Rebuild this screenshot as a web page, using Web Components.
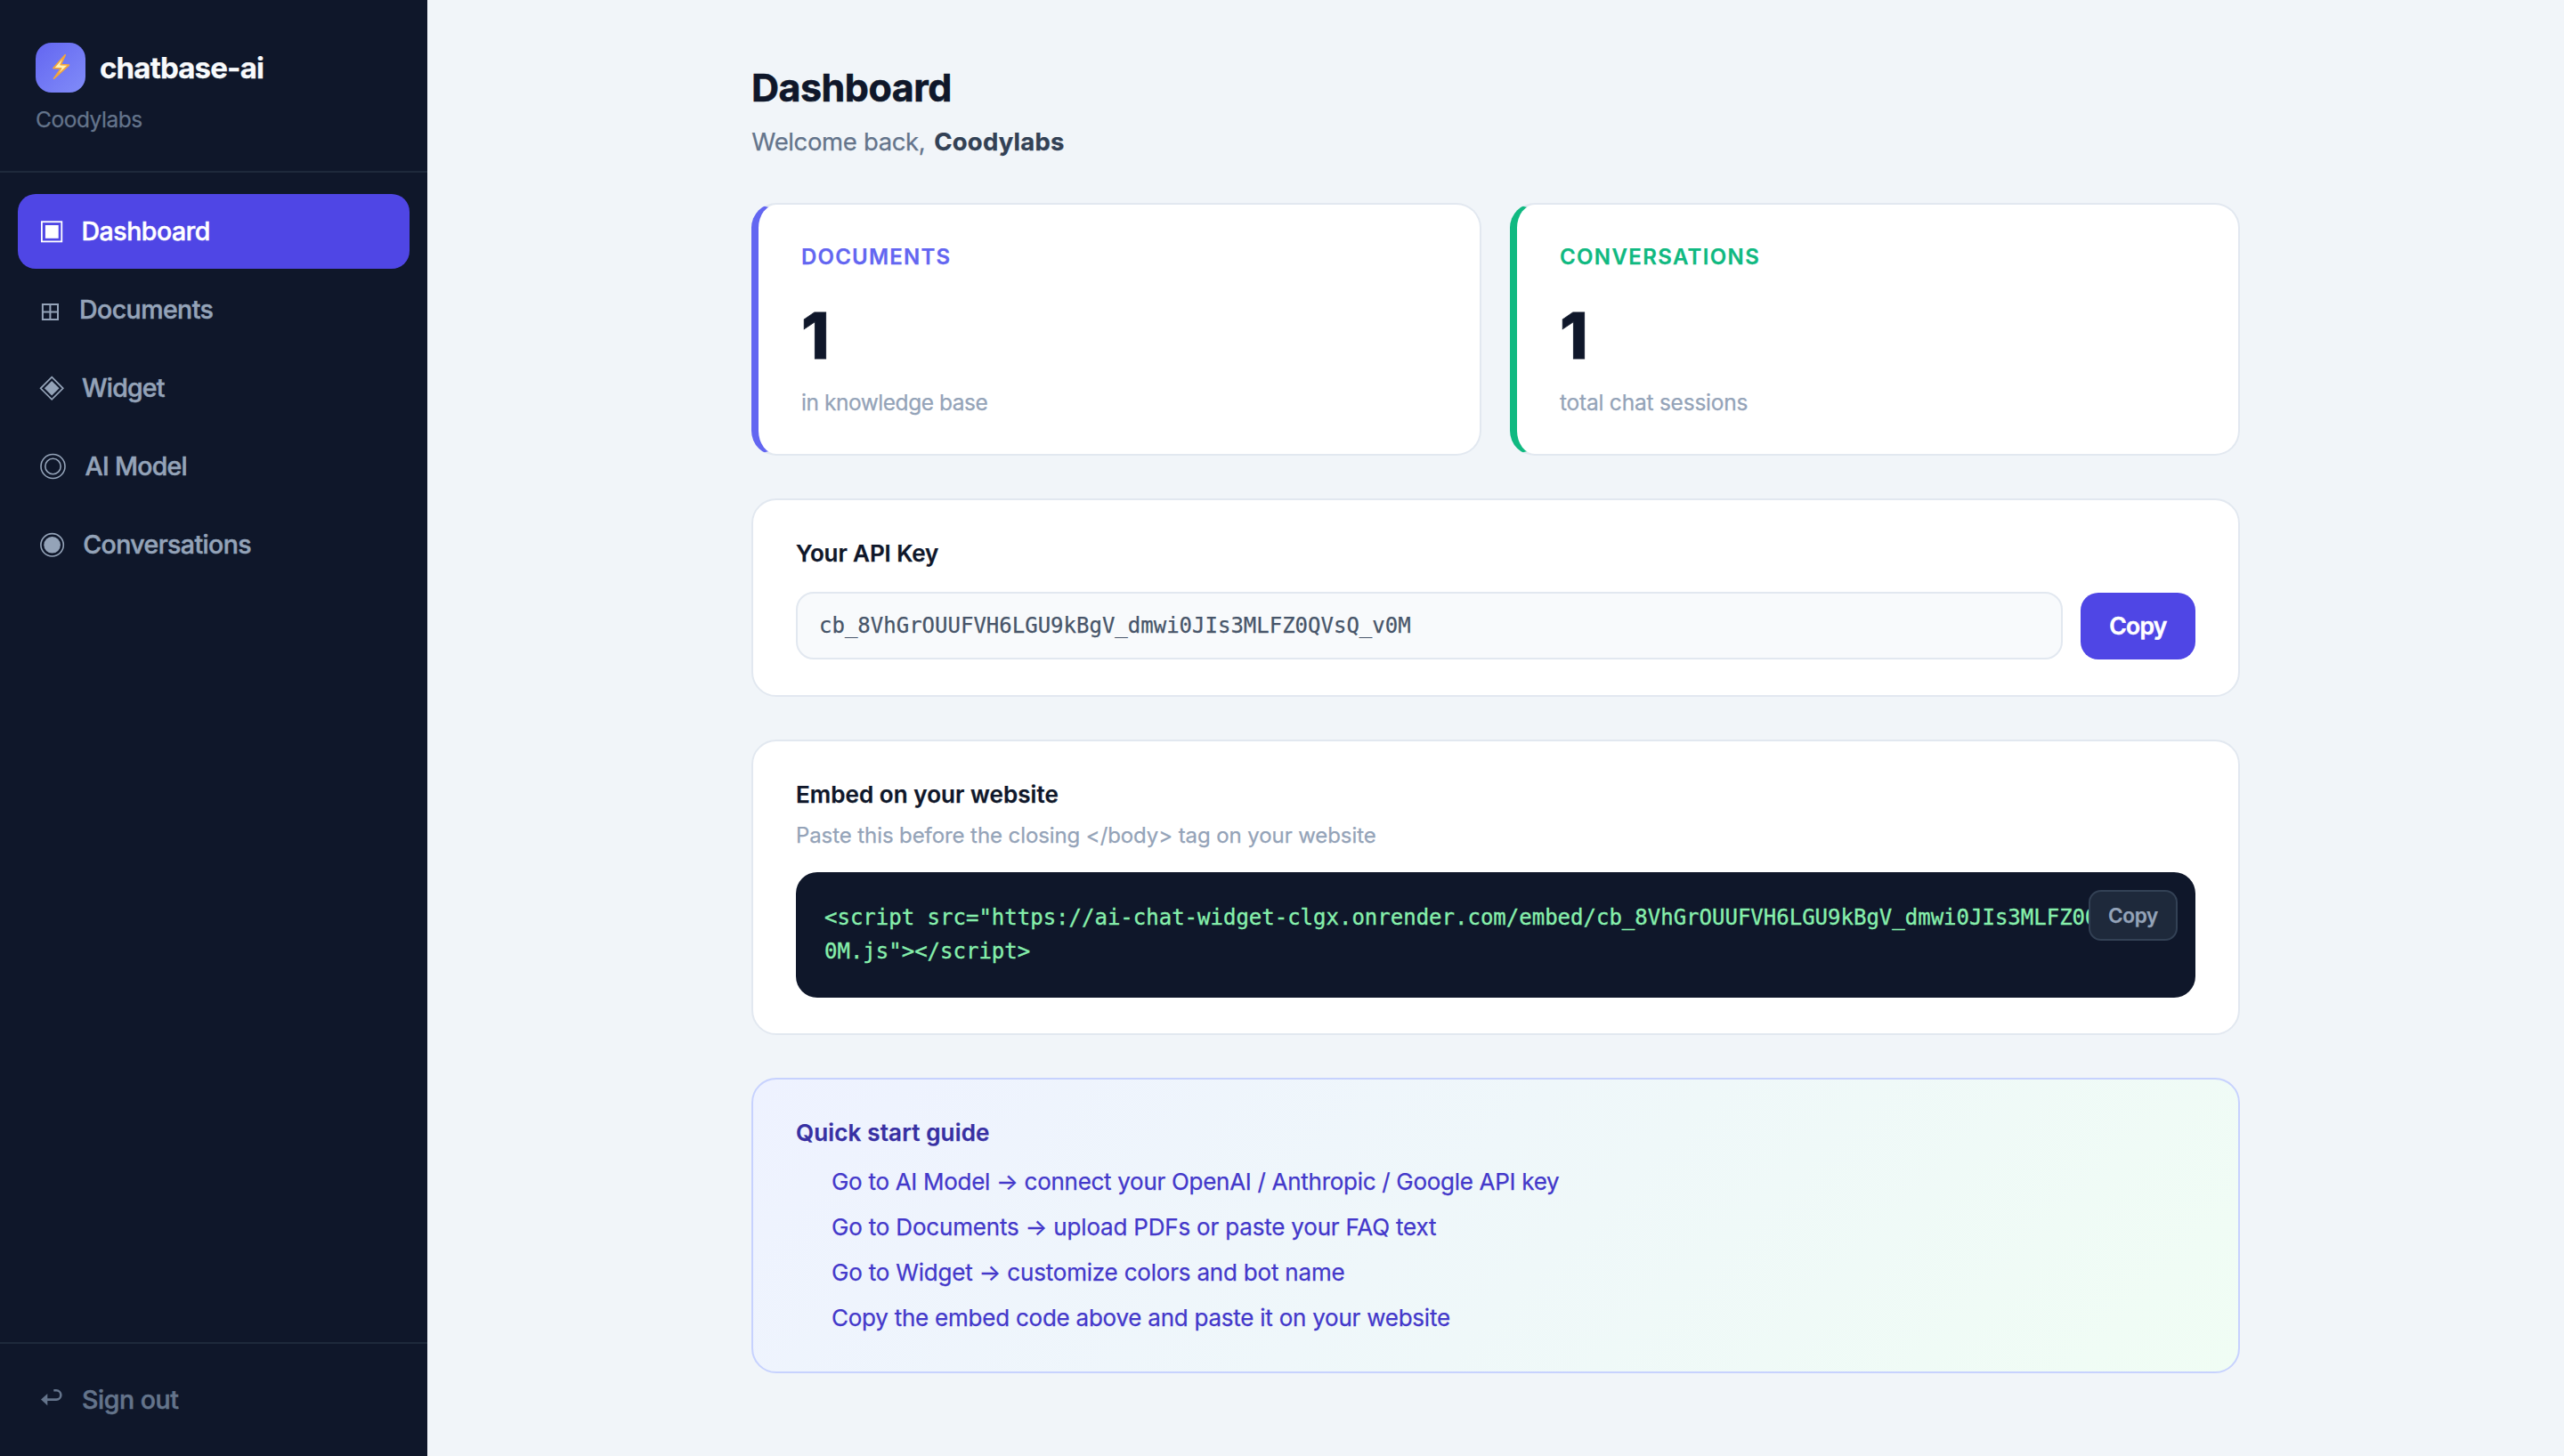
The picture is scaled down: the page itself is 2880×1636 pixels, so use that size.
<!DOCTYPE html>
<html lang="en">
<head>
<meta charset="utf-8">
<title>chatbase-ai – Dashboard</title>
<style>
html,body{margin:0;height:100%}
body{font-family:Inter,"Liberation Sans",sans-serif;background:#f1f5f9;color:#0f172a;overflow:hidden;-webkit-text-stroke:.25px}
</style>
</head>
<body>
<app-shell>
  <app-sidebar slot="sidebar">
    <brand-mark slot="brand" name="chatbase-ai" org="Coodylabs"></brand-mark>
    <nav-item icon="dashboard" active style="--iw:27.5px;--ls:-.48px">Dashboard</nav-item>
    <nav-item icon="documents" style="--iw:25px;--ls:-.56px">Documents</nav-item>
    <nav-item icon="widget" style="--iw:28px;--ls:-.8px">Widget</nav-item>
    <nav-item icon="model" style="--iw:31.5px;--ls:-.72px">AI Model</nav-item>
    <nav-item icon="conversations" style="--iw:29.3px;--ls:-.6px">Conversations</nav-item>
    <nav-item slot="footer" icon="signout" muted style="--iw:28px;--ls:-.45px">Sign out</nav-item>
  </app-sidebar>
  <page-header heading="Dashboard">Welcome back, <strong slot="who">Coodylabs</strong></page-header>
  <stat-row>
    <stat-card label="DOCUMENTS" value="1" style="--accent:#6366f1;--lls:1.206px;--nls:-.46px">in knowledge base</stat-card>
    <stat-card label="CONVERSATIONS" value="1" style="--accent:#10b981;--lls:1.36px;--nls:-.22px">total chat sessions</stat-card>
  </stat-row>
  <panel-card heading="Your API Key" style="height:223px;--hls:-.1px">
    <api-key value="cb_8VhGrOUUFVH6LGU9kBgV_dmwi0JIs3MLFZ0QVsQ_v0M"></api-key>
  </panel-card>
  <panel-card heading="Embed on your website" style="height:332px;--hls:.055px">
    <embed-code></embed-code>
  </panel-card>
  <panel-card heading="Quick start guide" guide style="height:332px;--hls:.152px">
    <guide-list>
      <span style="letter-spacing:-.291px">Go to AI Model → connect your OpenAI / Anthropic / Google API key</span>
      <span style="letter-spacing:-.188px">Go to Documents → upload PDFs or paste your FAQ text</span>
      <span style="letter-spacing:-.2px">Go to Widget → customize colors and bot name</span>
      <span style="letter-spacing:-.24px">Copy the embed code above and paste it on your website</span>
    </guide-list>
  </panel-card>
</app-shell>
<script>
const define = (name, render) => customElements.define(name, class extends HTMLElement {
  connectedCallback() {
    if (this.shadowRoot) return;
    this.attachShadow({ mode: 'open' }).innerHTML =
      '<style>*{box-sizing:border-box}:host{box-sizing:border-box}</style>' + render(this);
  }
});

define('app-shell', () => `
<style>
:host{display:flex;height:100vh}
main{flex:1;display:flex;flex-direction:column;align-items:center;padding-top:72px}
.col{width:1672px;display:flex;flex-direction:column}
</style>
<slot name="sidebar"></slot>
<main><div class="col"><slot></slot></div></main>`);

define('app-sidebar', () => `
<style>
:host{display:flex;flex-direction:column;width:480px;flex:none;background:#0f172a}
header{height:194px;padding:48px 40px 0;border-bottom:2px solid #1e293b}
nav{flex:1;display:flex;flex-direction:column;gap:4px;padding:24px 20px}
footer{height:128px;padding:21px 20px;border-top:2px solid #1e293b}
</style>
<header><slot name="brand"></slot></header>
<nav><slot></slot></nav>
<footer><slot name="footer"></slot></footer>`);

define('brand-mark', el => `
<style>
:host{display:block}
.top{display:flex;align-items:center;gap:16px;height:56px}
.logo{width:56px;height:56px;border-radius:18px;background:linear-gradient(135deg,#6366f1,#818cf8)}
svg{display:block}
b{font-size:33px;line-height:56px;font-weight:700;letter-spacing:-.83px;color:#f8fafc}
.org{margin-top:14px;font-size:24.5px;line-height:32px;letter-spacing:-.46px;color:#64748b}
</style>
<div class="top">
<div class="logo"><svg width="56" height="56" viewBox="0 0 56 56">
<polygon points="33.2,13.8 20,28.6 28.6,28.9 20.6,40.2 37.4,25 28.2,24.6" fill="#fff3b8" stroke="#f3a63b" stroke-width="1.7" stroke-linejoin="round"/>
</svg></div><b>${el.getAttribute('name')}</b></div>
<div class="org">${el.getAttribute('org')}</div>`);

const ICONS = {
  dashboard: '<rect x="2.9" y="9.2" width="22.4" height="22.2" fill="none" stroke-width="1.8"/><rect x="6.9" y="13" width="14.8" height="14.8" fill="currentColor" stroke="none"/>',
  documents: '<path d="M3.9 14H21V31H3.9ZM12.4 14V31M3.9 22.6H21" fill="none" stroke-width="2"/>',
  widget: '<path d="M14.2 7.7L26.8 20.3L14.2 32.9L1.6 20.3Z" fill="none" stroke-width="1.7"/><path d="M14.2 12L22.5 20.3L14.2 28.6L5.9 20.3Z" fill="currentColor" stroke="none"/>',
  model: '<circle cx="15.5" cy="20" r="13.5" fill="none" stroke-width="1.6"/><circle cx="15.5" cy="20" r="8.7" fill="none" stroke-width="1.6"/>',
  conversations: '<circle cx="14.6" cy="20.3" r="12.7" fill="none" stroke-width="1.6"/><circle cx="14.6" cy="20.3" r="9.3" fill="currentColor" stroke="none"/>',
  signout: '<path d="M8.5 19.6H19.2A5.1 5.1 0 0 0 19.2 9.3H16.3" fill="none" stroke-width="2.6"/><path d="M2 19.6L9.3 13V26.2Z" fill="currentColor" stroke="none"/>'
};
define('nav-item', el => `
<style>
:host{display:flex;align-items:center;gap:20px;height:84px;padding:0 24px;border-radius:20px;color:#94a3b8}
:host([active]){background:#4f46e5;color:#fff}
:host([muted]){color:#64748b}
.i{width:var(--iw);height:40px;flex:none}
svg{display:block;overflow:visible}
.t{font-size:28.5px;line-height:40px;font-weight:500;letter-spacing:var(--ls);white-space:nowrap;-webkit-text-stroke:.5px}
</style>
<span class="i"><svg width="32" height="40" viewBox="0 0 32 40" stroke="currentColor">${ICONS[el.getAttribute('icon')]}</svg></span>
<span class="t"><slot></slot></span>`);

define('page-header', el => `
<style>
:host{display:block;height:156px}
h1{margin:0 0 14.5px;font-size:43px;line-height:52px;font-weight:700;letter-spacing:-.5px;color:#0f172a;-webkit-text-stroke:.6px}
p{margin:0;padding-left:.3px;font-size:27.5px;line-height:40px;letter-spacing:-.358px;color:#64748b;white-space:pre}
::slotted(strong){margin-left:2.5px;font-weight:700;letter-spacing:.2px;color:#334155}
</style>
<h1>${el.getAttribute('heading')}</h1><p><slot></slot><slot name="who"></slot></p>`);

define('stat-row', () => `
<style>:host{display:grid;grid-template-columns:1fr 1fr;gap:32px}</style><slot></slot>`);

define('stat-card', el => `
<style>
:host{display:block;height:284px;padding:43px 48px 0;background:#fff;border:2px solid #e2e8f0;border-left:8px solid var(--accent);border-radius:28px}
.l{font-size:24px;line-height:32px;font-weight:600;letter-spacing:var(--lls);color:var(--accent)}
.v{margin:35.5px 0 23.5px;font-size:72px;line-height:72px;font-weight:800;color:#0f172a;-webkit-text-stroke:.8px}
.n{font-size:24.5px;line-height:32px;letter-spacing:var(--nls);color:#94a3b8}
</style>
<div class="l">${el.getAttribute('label')}</div>
<div class="v">${el.getAttribute('value')}</div>
<div class="n"><slot></slot></div>`);

define('panel-card', el => `
<style>
:host{display:block;margin-top:48px;padding:43.5px 48px 0;background:#fff;border:2px solid #e2e8f0;border-radius:28px}
:host([guide]){background:linear-gradient(135deg,#eef2ff,#f0fdf4);border-color:#c7d2fe}
h2{margin:0;font-size:26px;line-height:32px;font-weight:600;letter-spacing:var(--hls);color:#0f172a}
:host([guide]) h2{color:#3730a3}
</style>
<h2>${el.getAttribute('heading')}</h2><slot></slot>`);

define('api-key', el => `
<style>
:host{display:flex;gap:20px;margin-top:27.5px;height:76px}
.f{flex:1;padding:0 24px;border:2px solid #e2e8f0;border-radius:20px;background:#f8fafc;color:#475569;font:24px/72px "DejaVu Sans Mono",monospace}
button{width:129px;margin:1px 0 0;height:75px;padding:0;border:0;border-radius:20px;background:#4f46e5;color:#fff;font:600 26.5px/75px Inter,sans-serif;letter-spacing:-.7px;-webkit-text-stroke:.5px}
</style>
<div class="f">${el.getAttribute('value')}</div><button>Copy</button>`);

define('embed-code', () => `
<style>
:host{display:block}
p{margin:14.5px 0 25px;font-size:24px;line-height:32px;letter-spacing:-.09px;color:#94a3b8}
.box{position:relative;height:141px;padding:31.5px 32px;border-radius:24px;background:#0f172a}
code{display:block;font:24px/38.4px "DejaVu Sans Mono",monospace;color:#86efac;word-break:break-all;-webkit-text-stroke:.35px}
button{position:absolute;top:20px;right:20px;width:100px;height:57px;padding:0;border:2px solid #334155;border-radius:14px;background:#1e293b;color:#94a3b8;font:600 22.5px/52px Inter,sans-serif;letter-spacing:-.3px}
</style>
<p>Paste this before the closing &lt;/body&gt; tag on your website</p>
<div class="box"><code>&lt;script src="https://ai-chat-widget-clgx.onrender.com/embed/cb_8VhGrOUUFVH6LGU9kBgV_dmwi0JIs3MLFZ0QVsQ_v0M.js"&gt;&lt;/script&gt;</code><button>Copy</button></div>`);

define('guide-list', () => `
<style>
:host{display:flex;flex-direction:column;margin-top:13px;padding-left:40px}
::slotted(span){font-size:26px;line-height:51px;color:#4338ca}
</style><slot></slot>`);
</script>
</body>
</html>
